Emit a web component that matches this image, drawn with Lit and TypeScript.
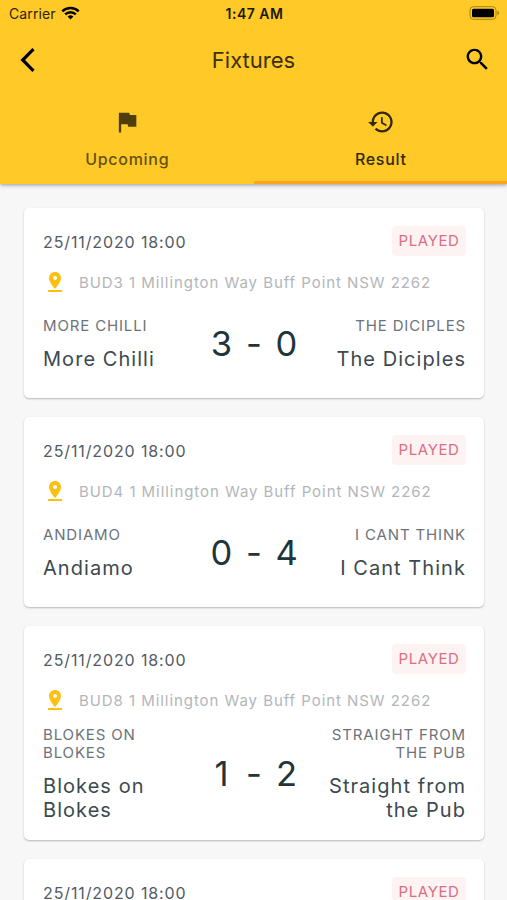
import { LitElement, html, css } from "lit";
import { customElement, property } from "lit/decorators.js";

interface Fixture {
  date: string;
  venue: string;
  home: string;
  away: string;
  score: [number, number];
}

const FIXTURES: Fixture[] = [
  { date: "25/11/2020 18:00", venue: "BUD3 1 Millington Way Buff Point NSW 2262", home: "More Chilli", away: "The Diciples", score: [3, 0] },
  { date: "25/11/2020 18:00", venue: "BUD4 1 Millington Way Buff Point NSW 2262", home: "Andiamo", away: "I Cant Think", score: [0, 4] },
  { date: "25/11/2020 18:00", venue: "BUD8 1 Millington Way Buff Point NSW 2262", home: "Blokes on Blokes", away: "Straight from the Pub", score: [1, 2] },
];

// The last card only shows its top row above the fold.
const NEXT_DATE = "25/11/2020 18:00";

@customElement("fixture-card")
export class FixtureCard extends LitElement {
  @property({ attribute: false }) fixture?: Fixture;
  @property() date = "";

  static styles = css`
    :host {
      display: block;
      box-sizing: border-box;
      padding: 18px 18px 18px 19px;
      background: #fff;
      border-radius: 5px;
      box-shadow: 0 1px 2px rgba(0, 0, 0, 0.26);
      flex: none;
    }
    .top {
      display: flex;
      justify-content: space-between;
      align-items: center;
      height: 30px;
    }
    .date {
      font-size: 16px;
      letter-spacing: 0.88px;
      color: #535a62;
      padding-top: 2px;
    }
    .badge {
      box-sizing: border-box;
      width: 74px;
      height: 30px;
      line-height: 30px;
      text-align: center;
      border-radius: 4px;
      background: #fdf3f3;
      color: #dc6e82;
      font-size: 15px;
      letter-spacing: 0.6px;
    }
    .place {
      display: flex;
      align-items: center;
      height: 52px;
    }
    .pin {
      width: 24px;
      height: 24px;
      margin-right: 12px;
      fill: #fdbf10;
      flex: none;
    }
    .venue {
      font-size: 15px;
      letter-spacing: 0.94px;
      color: #b3b6b9;
      white-space: nowrap;
    }
    .match {
      display: flex;
      align-items: center;
      min-height: 72px;
    }
    .team {
      flex: 1 1 0;
      min-width: 0;
    }
    .away {
      text-align: right;
    }
    .code {
      font-size: 15px;
      line-height: 18px;
      letter-spacing: 0.85px;
      color: #6d737a;
      text-transform: uppercase;
    }
    .name {
      margin-top: 12px;
      font-size: 20px;
      line-height: 24px;
      letter-spacing: 1.05px;
      color: #3d494e;
    }
    .score {
      display: grid;
      grid-template-columns: 22px 1fr 22px;
      text-align: center;
      width: 87px;
      margin: 0 19px 0 18px;
      font-size: 34.5px;
      line-height: 42px;
      color: #20343a;
    }
  `;

  render() {
    const f = this.fixture;
    return html`
      <div class="top">
        <span class="date">${f ? f.date : this.date}</span>
        <span class="badge">PLAYED</span>
      </div>
      ${f
        ? html`
            <div class="place">
              <svg class="pin" viewBox="0 0 24 24">
                <path d="M18 8c0-3.310-2.690-6-6-6S6 4.690 6 8c0 4.500 6 11 6 11s6-6.500 6-11zm-8 0c0-1.100.9-2 2-2s2 .9 2 2-.89 2-2 2c-1.100 0-2-.9-2-2zM5 20v2h14v-2H5z" />
              </svg>
              <span class="venue">${f.venue}</span>
            </div>
            <div class="match">
              <div class="team">
                <div class="code">${f.home}</div>
                <div class="name">${f.home}</div>
              </div>
              <div class="score"><span>${f.score[0]}</span><span>-</span><span>${f.score[1]}</span></div>
              <div class="team away">
                <div class="code">${f.away}</div>
                <div class="name">${f.away}</div>
              </div>
            </div>
          `
        : null}
    `;
  }
}

@customElement("app-root")
export class AppRoot extends LitElement {
  static styles = css`
    :host {
      display: flex;
      flex-direction: column;
      height: 900px;
      overflow: hidden;
      background: #f7f7f7;
      font-family: Inter, "Liberation Sans", sans-serif;
    }
    .header {
      position: relative;
      flex: none;
      height: 184px;
      background: #ffca28;
      box-shadow: 0 1px 4px rgba(0, 0, 0, 0.4);
      display: flex;
      flex-direction: column;
    }
    .status {
      display: grid;
      grid-template-columns: 1fr auto 1fr;
      align-items: center;
      height: 27px;
      padding: 0 7px 0 9px;
      font-size: 14px;
      color: #2b230b;
    }
    .carrier {
      display: flex;
      align-items: center;
      gap: 5px;
      letter-spacing: 0.1px;
    }
    .wifi {
      width: 19px;
      height: 14px;
      margin-bottom: 2px;
    }
    .clock {
      font-weight: 600;
      letter-spacing: 0.5px;
      color: #1c1704;
    }
    .battery {
      justify-self: end;
      width: 31px;
      height: 14px;
      margin-bottom: 1px;
    }
    .bar {
      display: grid;
      grid-template-columns: 40px 1fr 40px;
      align-items: center;
      height: 66px;
      padding: 0 13px 0 11px;
    }
    .back {
      width: 32px;
      height: 32px;
    }
    .search {
      width: 29px;
      height: 29px;
      justify-self: end;
      margin: 0 2px 1px 0;
    }
    .title {
      text-align: center;
      font-size: 22px;
      color: #3c300c;
      padding-left: 2px;
    }
    .tabs {
      flex: 1;
      display: grid;
      grid-template-columns: 1fr 1fr;
    }
    .tab {
      display: flex;
      flex-direction: column;
      align-items: center;
      box-sizing: border-box;
      padding: 15px 0 0 1px;
      border-bottom: 3px solid transparent;
      font-size: 16px;
      font-weight: 500;
      line-height: 20px;
      letter-spacing: 0.7px;
      color: #66510f;
    }
    .tab.active {
      color: #33280a;
      border-bottom-color: #ffa21f;
    }
    .icon {
      width: 28px;
      height: 28px;
      margin-bottom: 13px;
      fill: currentColor;
    }
    .flag {
      fill: #4f3e0c;
    }
    .list {
      flex: 1;
      min-height: 0;
      overflow: hidden;
      display: flex;
      flex-direction: column;
      gap: 19px;
      padding: 24px 23px 0 24px;
    }
  `;

  render() {
    return html`
      <div class="header">
        <div class="status">
          <div class="carrier">
            <span>Carrier</span>
            <svg class="wifi" viewBox="0 0 19 14">
              <g fill="none" stroke="#000" stroke-width="2.500">
                <path d="M1.300 5.300a11.600 11.600 0 0 1 16.400 0" />
                <path d="M4.200 8.400a7.500 7.500 0 0 1 10.600 0" />
              </g>
              <path d="M9.500 13.500l-2.900-2.900a4.100 4.100 0 0 1 5.800 0z" />
            </svg>
          </div>
          <span class="clock">1:47 AM</span>
          <svg class="battery" viewBox="0 0 31 14">
            <rect x="1" y="0.700" width="26" height="12.600" rx="3.500" fill="none" stroke="#a58319" />
            <rect x="3" y="2.700" width="22" height="8.600" rx="1.500" />
            <path d="M28.300 4.800c2.300.7 2.300 3.700 0 4.400z" fill="#a58319" />
          </svg>
        </div>
        <div class="bar">
          <svg class="back" viewBox="0 0 32 32">
            <path d="M22.500 5.200L11.700 16l10.800 10.800" fill="none" stroke="#000" stroke-width="3.200" />
          </svg>
          <span class="title">Fixtures</span>
          <svg class="search" viewBox="0 0 24 24">
            <path d="M15.500 14h-.79l-.28-.27C15.410 12.590 16 11.110 16 9.500 16 5.910 13.090 3 9.500 3S3 5.910 3 9.500 5.910 16 9.500 16c1.610 0 3.090-.59 4.230-1.570l.27.28v.79l5 4.990L20.490 19l-4.990-5zm-6 0C7.010 14 5 11.990 5 9.500S7.010 5 9.500 5 14 7.010 14 9.500 11.990 14 9.500 14z" />
          </svg>
        </div>
        <div class="tabs">
          <div class="tab">
            <svg class="icon flag" viewBox="0 0 24 24">
              <path d="M14.400 6L14 4H5v17h2v-7h5.600l.4 2h7V6z" />
            </svg>
            <span>Upcoming</span>
          </div>
          <div class="tab active">
            <svg class="icon" viewBox="0 0 24 24">
              <path d="M13 3c-4.970 0-9 4.030-9 9H1l3.890 3.890.07.14L9 12H6c0-3.870 3.130-7 7-7s7 3.130 7 7-3.130 7-7 7c-1.930 0-3.680-.79-4.940-2.060l-1.420 1.420C8.270 19.990 10.510 21 13 21c4.970 0 9-4.030 9-9s-4.030-9-9-9zm-1 5v5l4.280 2.540.72-1.210-3.500-2.080V8H12z" />
            </svg>
            <span>Result</span>
          </div>
        </div>
      </div>
      <div class="list">
        ${FIXTURES.map((f) => html`<fixture-card .fixture=${f}></fixture-card>`)}
        <fixture-card .date=${NEXT_DATE}></fixture-card>
      </div>
    `;
  }
}
